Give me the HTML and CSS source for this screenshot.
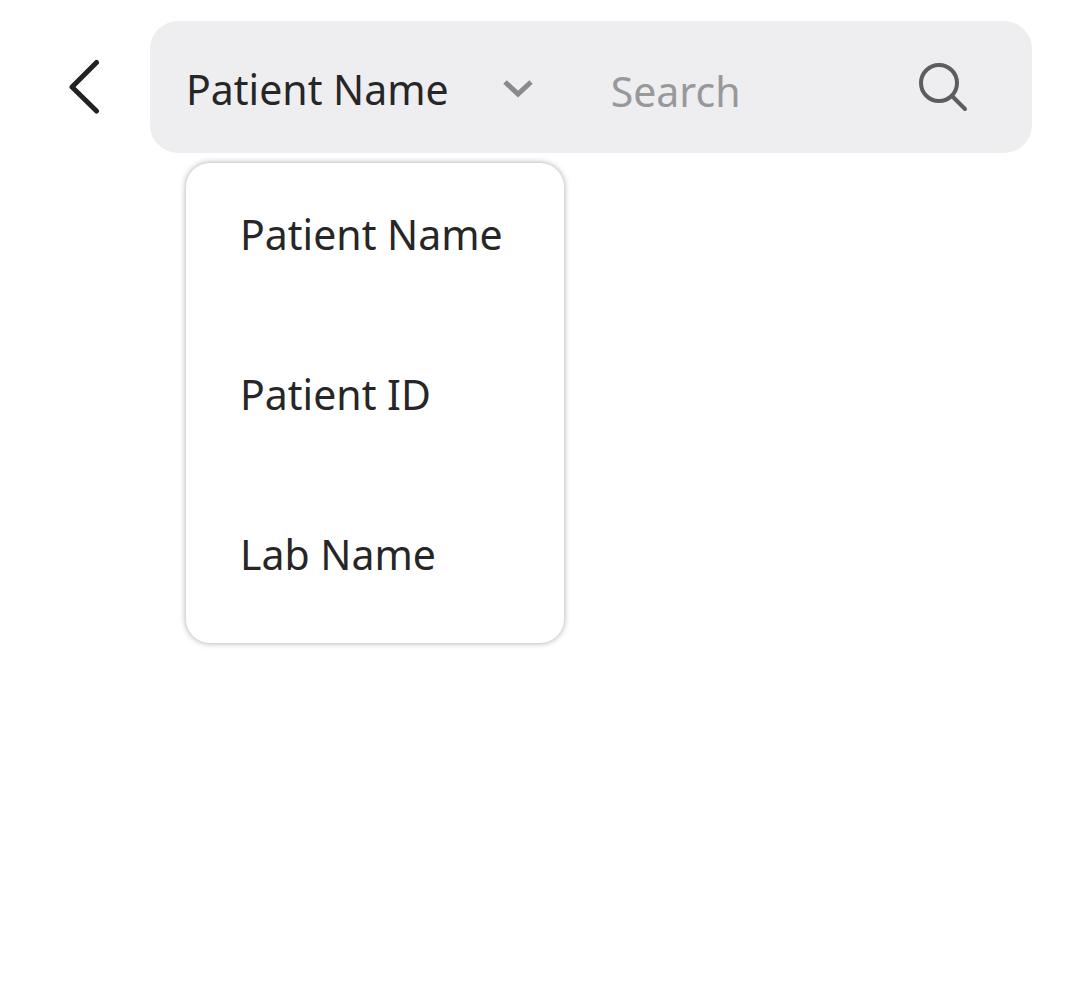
FILE: index.html
```html
<!DOCTYPE html>
<html lang="en">

<head>
    <meta charset="UTF-8">
    <meta name="viewport" content="width=device-width, initial-scale=1.0">
    <title>Patient Search</title>
    <link rel="stylesheet" href="styles.css">
</head>

<body>
    <header class="top-bar">
        <button type="button" class="back-button" aria-label="Back">
            <svg width="32" height="56" viewBox="0 0 32 56">
                <path d="M28.500 3.500L4 28L28.500 52" />
            </svg>
        </button>

        <form class="search-bar" role="search">
            <div class="filter">
                <button type="button" class="filter-button" aria-haspopup="listbox" aria-expanded="true">
                    <span>Patient Name</span>
                    <svg width="32" height="22" viewBox="0 0 32 22">
                        <path d="M2 4L15 16L28 4" />
                    </svg>
                </button>
                <div class="filter-menu" role="listbox" aria-label="Search by">
                    <button type="button" role="option" aria-selected="true">Patient Name</button>
                    <button type="button" role="option" aria-selected="false">Patient ID</button>
                    <button type="button" role="option" aria-selected="false">Lab Name</button>
                </div>
            </div>
            <input type="text" class="search-input" name="search" placeholder="Search" aria-label="Search">
            <button type="submit" class="search-button" aria-label="Search">
                <svg width="52" height="52" viewBox="0 0 52 52">
                    <circle cx="23" cy="22" r="18" />
                    <path d="M36 35L49 48" />
                </svg>
            </button>
        </form>
    </header>
</body>

</html>
```

FILE: styles.css
```css
* {
    box-sizing: border-box;
}

body {
    min-height: 100vh;
    margin: 0;
    background-color: #fff;
    color: #262626;
    font-family: "Noto Sans", sans-serif;
    font-size: 41px;
}

button,
input {
    padding: 0;
    border: none;
    background: none;
    color: inherit;
    font: inherit;
}

button {
    cursor: pointer;
}

svg {
    display: block;
    fill: none;
    stroke-width: 4;
    stroke-linecap: round;
}

.top-bar {
    display: flex;
    align-items: center;
    gap: 50px;
    padding: 21px 48px 0 68px;
}

.back-button svg {
    stroke: #222;
    stroke-width: 5;
    stroke-linejoin: round;
}

.search-bar {
    display: flex;
    flex: 1;
    align-items: center;
    min-width: 0;
    height: 132px;
    padding: 0 64px 0 36px;
    border-radius: 28px;
    background-color: #eeeef0;
}

.filter {
    position: relative;
    padding-top: 4px;
}

.filter-button {
    display: flex;
    align-items: center;
    gap: 54px;
    white-space: nowrap;
}

.filter-button svg {
    stroke: #8a8a8a;
    stroke-width: 5;
    stroke-linecap: butt;
}

.filter-menu {
    position: absolute;
    top: 106px;
    left: 0;
    z-index: 10;
    display: flex;
    flex-direction: column;
    width: 378px;
    border-radius: 24px;
    background-color: #fff;
    box-shadow: 0 0 6px rgba(0, 0, 0, 0.35);
}

.filter-menu button {
    height: 160px;
    padding: 0 54px 18px;
    text-align: left;
}

.search-input {
    flex: 1;
    min-width: 0;
    margin-left: 76px;
    padding-top: 8px;
    outline: none;
}

.search-input::placeholder {
    color: #98989a;
    opacity: 1;
}

.search-button svg {
    stroke: #5d5d5d;
}
```
